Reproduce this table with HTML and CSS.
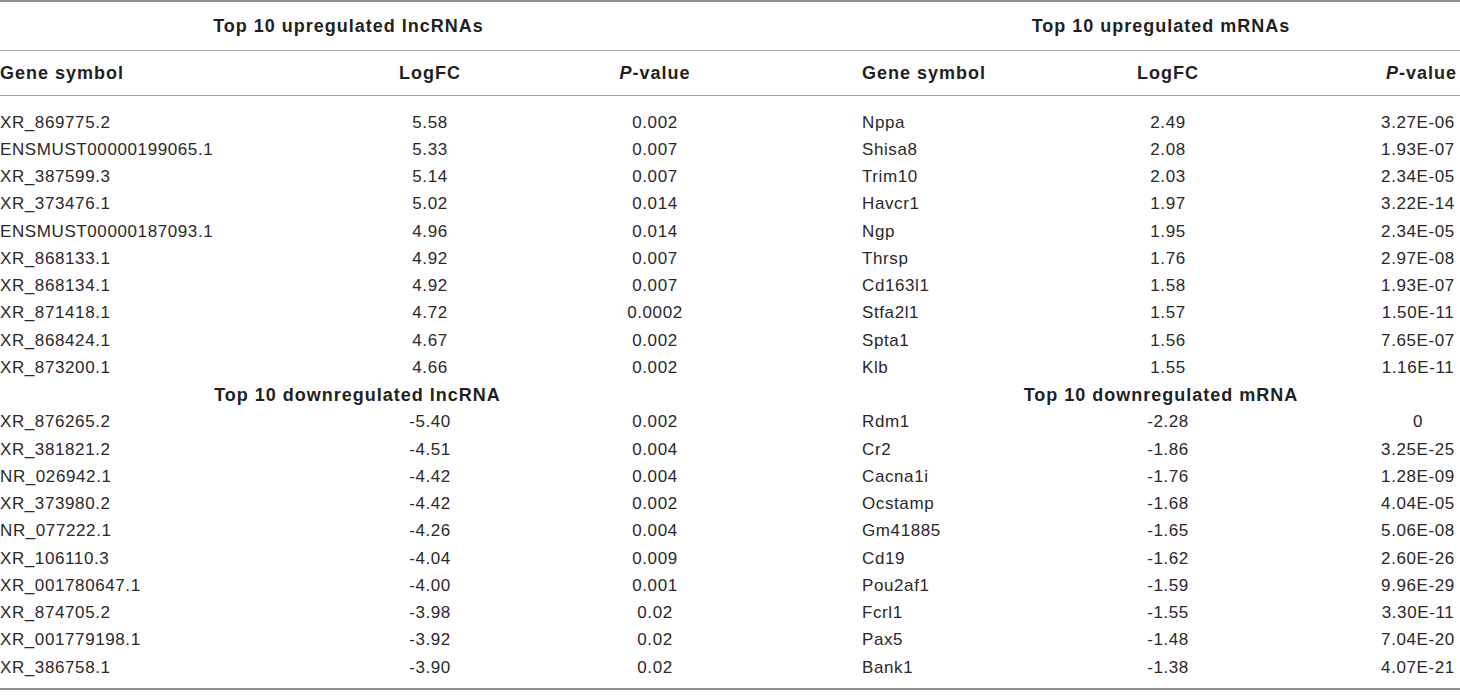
FILE: index.html
```html
<!DOCTYPE html>
<html>
<head>
<meta charset="utf-8">
<link rel="stylesheet" href="styles.css">
</head>
<body>
<table class="tbl">
  <colgroup>
    <col class="c-gene1"><col class="c-fc1"><col class="c-p1"><col class="c-gap"><col class="c-gene2"><col class="c-fc2"><col class="c-p2">
  </colgroup>
  <thead>
    <tr class="grp">
      <th colspan="3">Top 10 upregulated lncRNAs</th>
      <th></th>
      <th colspan="3" class="grp-r">Top 10 upregulated mRNAs</th>
    </tr>
    <tr class="cols">
      <th class="gene">Gene symbol</th>
      <th class="fc">LogFC</th>
      <th class="p1"><i>P</i>-value</th>
      <th></th>
      <th class="gene">Gene symbol</th>
      <th class="fc">LogFC</th>
      <th class="p2"><i>P</i>-value</th>
    </tr>
  </thead>
  <tbody>
    <tr class="first"><td class="gene">XR_869775.2</td><td class="fc">5.58</td><td class="p1">0.002</td><td></td><td class="gene">Nppa</td><td class="fc">2.49</td><td class="p2">3.27E-06</td></tr>
    <tr><td class="gene">ENSMUST00000199065.1</td><td class="fc">5.33</td><td class="p1">0.007</td><td></td><td class="gene">Shisa8</td><td class="fc">2.08</td><td class="p2">1.93E-07</td></tr>
    <tr><td class="gene">XR_387599.3</td><td class="fc">5.14</td><td class="p1">0.007</td><td></td><td class="gene">Trim10</td><td class="fc">2.03</td><td class="p2">2.34E-05</td></tr>
    <tr><td class="gene">XR_373476.1</td><td class="fc">5.02</td><td class="p1">0.014</td><td></td><td class="gene">Havcr1</td><td class="fc">1.97</td><td class="p2">3.22E-14</td></tr>
    <tr><td class="gene">ENSMUST00000187093.1</td><td class="fc">4.96</td><td class="p1">0.014</td><td></td><td class="gene">Ngp</td><td class="fc">1.95</td><td class="p2">2.34E-05</td></tr>
    <tr><td class="gene">XR_868133.1</td><td class="fc">4.92</td><td class="p1">0.007</td><td></td><td class="gene">Thrsp</td><td class="fc">1.76</td><td class="p2">2.97E-08</td></tr>
    <tr><td class="gene">XR_868134.1</td><td class="fc">4.92</td><td class="p1">0.007</td><td></td><td class="gene">Cd163l1</td><td class="fc">1.58</td><td class="p2">1.93E-07</td></tr>
    <tr><td class="gene">XR_871418.1</td><td class="fc">4.72</td><td class="p1">0.0002</td><td></td><td class="gene">Stfa2l1</td><td class="fc">1.57</td><td class="p2">1.50E-11</td></tr>
    <tr><td class="gene">XR_868424.1</td><td class="fc">4.67</td><td class="p1">0.002</td><td></td><td class="gene">Spta1</td><td class="fc">1.56</td><td class="p2">7.65E-07</td></tr>
    <tr><td class="gene">XR_873200.1</td><td class="fc">4.66</td><td class="p1">0.002</td><td></td><td class="gene">Klb</td><td class="fc">1.55</td><td class="p2">1.16E-11</td></tr>
    <tr class="sub"><th colspan="3" class="sub-l">Top 10 downregulated lncRNA</th><th></th><th colspan="3" class="sub-r">Top 10 downregulated mRNA</th></tr>
    <tr><td class="gene">XR_876265.2</td><td class="fc">-5.40</td><td class="p1">0.002</td><td></td><td class="gene">Rdm1</td><td class="fc">-2.28</td><td class="p2">0</td></tr>
    <tr><td class="gene">XR_381821.2</td><td class="fc">-4.51</td><td class="p1">0.004</td><td></td><td class="gene">Cr2</td><td class="fc">-1.86</td><td class="p2">3.25E-25</td></tr>
    <tr><td class="gene">NR_026942.1</td><td class="fc">-4.42</td><td class="p1">0.004</td><td></td><td class="gene">Cacna1i</td><td class="fc">-1.76</td><td class="p2">1.28E-09</td></tr>
    <tr><td class="gene">XR_373980.2</td><td class="fc">-4.42</td><td class="p1">0.002</td><td></td><td class="gene">Ocstamp</td><td class="fc">-1.68</td><td class="p2">4.04E-05</td></tr>
    <tr><td class="gene">NR_077222.1</td><td class="fc">-4.26</td><td class="p1">0.004</td><td></td><td class="gene">Gm41885</td><td class="fc">-1.65</td><td class="p2">5.06E-08</td></tr>
    <tr><td class="gene">XR_106110.3</td><td class="fc">-4.04</td><td class="p1">0.009</td><td></td><td class="gene">Cd19</td><td class="fc">-1.62</td><td class="p2">2.60E-26</td></tr>
    <tr><td class="gene">XR_001780647.1</td><td class="fc">-4.00</td><td class="p1">0.001</td><td></td><td class="gene">Pou2af1</td><td class="fc">-1.59</td><td class="p2">9.96E-29</td></tr>
    <tr><td class="gene">XR_874705.2</td><td class="fc">-3.98</td><td class="p1">0.02</td><td></td><td class="gene">Fcrl1</td><td class="fc">-1.55</td><td class="p2">3.30E-11</td></tr>
    <tr><td class="gene">XR_001779198.1</td><td class="fc">-3.92</td><td class="p1">0.02</td><td></td><td class="gene">Pax5</td><td class="fc">-1.48</td><td class="p2">7.04E-20</td></tr>
    <tr class="last"><td class="gene">XR_386758.1</td><td class="fc">-3.90</td><td class="p1">0.02</td><td></td><td class="gene">Bank1</td><td class="fc">-1.38</td><td class="p2">4.07E-21</td></tr>
  </tbody>
</table>
</body>
</html>
```
FILE: styles.css
```css
html, body {
  margin: 0;
  padding: 0;
  background: #ffffff;
}
body {
  width: 1460px;
  height: 695px;
  overflow: hidden;
  font-family: "Liberation Sans", Arial, sans-serif;
  color: #231f20;
}
.tbl {
  width: 1460px;
  table-layout: fixed;
  border-collapse: collapse;
  border-spacing: 0;
  font-size: 17px;
}
.c-gene1 { width: 247px; }
.c-fc1 { width: 366px; }
.c-p1 { width: 84px; }
.c-gap { width: 165px; }
.c-gene2 { width: 200px; }
.c-fc2 { width: 212px; }
.c-p2 { width: 186px; }

.tbl th, .tbl td {
  padding: 0;
  white-space: nowrap;
  overflow: visible;
}
.tbl th {
  font-weight: bold;
  font-size: 18px;
  letter-spacing: 1px;
}
.tbl thead tr.grp th {
  height: 48px;
  border-top: 2px solid #8f8f8f;
  border-bottom: 1.5px solid #a0a0a0;
  text-align: center;
}
.tbl thead tr.cols th {
  height: 44px;
  border-bottom: 1.5px solid #a0a0a0;
}
.tbl td {
  height: 27.25px;
  letter-spacing: 0.6px;
  font-weight: normal;
  color: #2b2829;
}
.tbl tr.first td { padding-top: 13px; }
.tbl tr.last td {
  padding-bottom: 7px;
  border-bottom: 2px solid #8f8f8f;
}
.tbl tr.sub th {
  height: 27.25px;
  text-align: center;
}
.tbl tr.sub th.sub-l { padding-left: 18px; }

.gene { text-align: left; }
.fc { text-align: center; }
.p1 { text-align: center; }
.p2 { text-align: right; padding-right: 3px !important; }
.tbl tbody td.p2 { text-align: center; padding-left: 102px !important; padding-right: 0 !important; }
```
